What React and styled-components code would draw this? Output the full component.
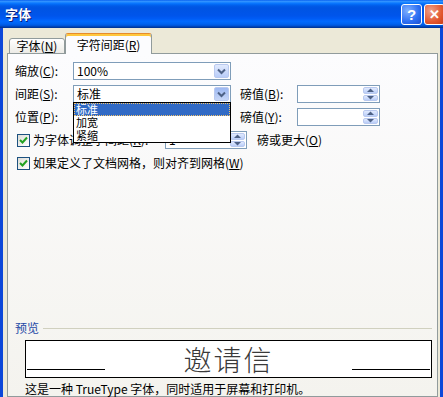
import styled, { createGlobalStyle } from 'styled-components'

const GlobalStyle = createGlobalStyle`
  html, body {
    margin: 0;
    padding: 0;
    background: #ece9d8;
  }
  body {
    font-family: "Noto Sans CJK SC", "Noto Sans", sans-serif;
    font-size: 12px;
    color: #000;
  }
`

const Chevron = () => (
  <svg width="9" height="7" viewBox="0 0 9 7">
    <path d="M1 1.5 L4.5 5 L8 1.5" fill="none" stroke="#4d6185" strokeWidth="2" />
  </svg>
)

const Arrow = ({ up }) => (
  <svg width="7" height="4" viewBox="0 0 7 4">
    <path d={up ? 'M0 4 L3.5 0.5 L7 4 Z' : 'M0 0 L3.5 3.5 L7 0 Z'} fill="#4d6185" />
  </svg>
)

const Tick = () => (
  <svg width="9" height="9" viewBox="0 0 9 9">
    <path d="M1 4 L3.5 6.5 L8 1.5" fill="none" stroke="#21a121" strokeWidth="2" />
  </svg>
)

const Combo = ({ value, pressed, children }) => (
  <ComboBox>
    <ComboValue>{value}</ComboValue>
    <DropButton $pressed={pressed}>
      <Chevron />
    </DropButton>
    {children}
  </ComboBox>
)

const Spin = ({ value, width }) => (
  <ComboBox $width={width}>
    <ComboValue>{value}</ComboValue>
    <SpinButtons>
      <SpinHalf>
        <Arrow up />
      </SpinHalf>
      <SpinHalf>
        <Arrow />
      </SpinHalf>
    </SpinButtons>
  </ComboBox>
)

const CheckBox = () => (
  <Box>
    <Tick />
  </Box>
)

const App = () => (
  <Window>
    <GlobalStyle />
    <TitleBar>
      <Title>字体</Title>
      <CaptionButton $kind="help">?</CaptionButton>
      <CaptionButton $kind="close">✕</CaptionButton>
    </TitleBar>
    <Frame>
      <Tabs>
        <Tab>
          字体(<u>N</u>)
        </Tab>
        <Tab $active>
          字符间距(<u>R</u>)
        </Tab>
      </Tabs>
      <Panel>
        <Form>
          <Label>
            缩放(<u>C</u>):
          </Label>
          <Combo value="100%" />
          <span />
          <span />
          <span />

          <Label>
            间距(<u>S</u>):
          </Label>
          <Combo value="标准" pressed>
            <DropList>
              <DropItem $selected>标准</DropItem>
              <DropItem>加宽</DropItem>
              <DropItem>紧缩</DropItem>
            </DropList>
          </Combo>
          <span />
          <Label>
            磅值(<u>B</u>):
          </Label>
          <Spin />

          <Label>
            位置(<u>P</u>):
          </Label>
          <Combo value="标准" />
          <span />
          <Label>
            磅值(<u>Y</u>):
          </Label>
          <Spin />

          <CheckRow>
            <CheckBox />
            <KernLabel>
              为字体调整字间距(<u>K</u>):
            </KernLabel>
            <Spin value="1" width={82} />
            <After>
              磅或更大(<u>O</u>)
            </After>
          </CheckRow>

          <CheckRow>
            <CheckBox />
            <span>
              如果定义了文档网格，则对齐到网格(<u>W</u>)
            </span>
          </CheckRow>
        </Form>

        <Preview>
          <PreviewHeader>
            <GroupTitle>预览</GroupTitle>
            <GroupLine />
          </PreviewHeader>
          <PreviewBox>
            <Rule $side="left" />
            <Sample>邀请信</Sample>
            <Rule $side="right" />
          </PreviewBox>
          <Description>这是一种 TrueType 字体，同时适用于屏幕和打印机。</Description>
        </Preview>
      </Panel>
    </Frame>
  </Window>
)

export default App

const Window = styled.div`
  width: 443px;
  height: 397px;
  display: flex;
  flex-direction: column;
  overflow: hidden;
`

const TitleBar = styled.div`
  height: 28px;
  flex-shrink: 0;
  display: flex;
  align-items: center;
  gap: 2px;
  padding-left: 5px;
  background: linear-gradient(
    to bottom,
    #0058ee 0%,
    #3593ff 4%,
    #288eff 7%,
    #127dff 10%,
    #036ffc 14%,
    #0262ee 18%,
    #0057e5 24%,
    #0054e3 30%,
    #0055eb 56%,
    #005bf5 66%,
    #026afe 76%,
    #0062ef 86%,
    #0052d6 92%,
    #0040ab 96%,
    #003092 100%
  );
`

const Title = styled.div`
  flex: 1;
  color: #fff;
  font-weight: bold;
  font-size: 13px;
  line-height: 28px;
  text-shadow: 1px 1px 0 #0a1e7a;
`

const CaptionButton = styled.div`
  width: 21px;
  height: 21px;
  box-sizing: border-box;
  border: 1px solid #fff;
  border-radius: 3px;
  display: flex;
  align-items: center;
  justify-content: center;
  color: #fff;
  font-family: "Liberation Sans", sans-serif;
  font-weight: bold;
  font-size: ${p => (p.$kind === 'close' ? '13px' : '15px')};
  margin-right: ${p => (p.$kind === 'close' ? '-2px' : '0')};
  flex-shrink: 0;
  background: ${p =>
    p.$kind === 'close'
      ? 'radial-gradient(circle at 30% 30%, #f0a088, #e2572f 60%, #c63c17)'
      : 'radial-gradient(circle at 30% 30%, #7fb0ff, #2c6ef2 60%, #1c4fd0)'};
`

const Frame = styled.div`
  flex: 1;
  display: flex;
  flex-direction: column;
  background: #ece9d8;
  border-left: 3px solid #0c47d9;
  border-right: 3px solid #0c47d9;
  padding: 5px 2px 0 4px;
  min-height: 0;
`

const Tabs = styled.div`
  display: flex;
  align-items: flex-end;
  height: 21px;
  padding-left: 2px;
  margin-bottom: -1px;
  position: relative;
  z-index: 1;
`

const Tab = styled.div`
  box-sizing: border-box;
  width: ${p => (p.$active ? '87px' : '56px')};
  height: ${p => (p.$active ? '21px' : '16px')};
  border: 1px solid #919b9c;
  border-bottom: ${p => (p.$active ? 'none' : '1px solid #919b9c')};
  border-top: ${p => (p.$active ? '1px solid #e68b2c' : '1px solid #919b9c')};
  border-radius: 3px 3px 0 0;
  background: ${p =>
    p.$active ? '#fcfcfe' : 'linear-gradient(to bottom, #fff, #ecebe6)'};
  box-shadow: ${p => (p.$active ? 'inset 0 2px 0 #ffc73c' : 'none')};
  display: flex;
  align-items: center;
  justify-content: center;
  line-height: 14px;
  padding-top: ${p => (p.$active ? '1px' : '0')};
`

const Panel = styled.div`
  flex: 1;
  border: 1px solid #919b9c;
  background: linear-gradient(to bottom, #fcfcfe, #f4f3ee);
  padding: 8px 5px 0 7px;
  display: flex;
  flex-direction: column;
`

const Form = styled.div`
  display: grid;
  grid-template-columns: 58px 158px 9px 57px 83px;
  grid-auto-rows: 18px;
  row-gap: 5px;
  align-items: center;
`

const Label = styled.span`
  line-height: 18px;
  white-space: nowrap;
`

const ComboBox = styled.div`
  position: relative;
  box-sizing: border-box;
  height: 18px;
  width: ${p => (p.$width ? p.$width + 'px' : 'auto')};
  border: 1px solid #7f9db9;
  background: #fff;
  display: flex;
  align-items: stretch;
  padding-left: 3px;
`

const ComboValue = styled.span`
  flex: 1;
  line-height: 16px;
`

const DropButton = styled.div`
  width: 15px;
  margin: 1px;
  box-sizing: border-box;
  border: 1px solid #b9c9ef;
  border-radius: 2px;
  background: ${p =>
    p.$pressed
      ? 'linear-gradient(to bottom, #9db8f2, #c7d6f7)'
      : 'linear-gradient(to bottom, #e1eafe, #b9cdf8)'};
  display: flex;
  align-items: center;
  justify-content: center;
`

const SpinButtons = styled.div`
  width: 15px;
  margin: 1px;
  display: flex;
  flex-direction: column;
  gap: 1px;
`

const SpinHalf = styled.div`
  flex: 1;
  box-sizing: border-box;
  border: 1px solid #b9c9ef;
  border-radius: 2px;
  background: linear-gradient(to bottom, #e1eafe, #b9cdf8);
  display: flex;
  align-items: center;
  justify-content: center;
`

const DropList = styled.div`
  position: absolute;
  left: -1px;
  top: 100%;
  width: 158px;
  box-sizing: border-box;
  border: 1px solid #000;
  background: #fff;
  z-index: 5;
`

const DropItem = styled.div`
  height: 13px;
  line-height: 13px;
  font-size: 11px;
  padding-left: 2px;
  background: ${p => (p.$selected ? '#316ac5' : 'transparent')};
  color: ${p => (p.$selected ? '#fff' : '#000')};
  outline: ${p => (p.$selected ? '1px dotted #f2c26b' : 'none')};
  outline-offset: -1px;
`

const CheckRow = styled.div`
  grid-column: 1 / -1;
  display: flex;
  align-items: center;
  padding-left: 2px;
  gap: 3px;
  line-height: 18px;
  white-space: nowrap;
`

const Box = styled.div`
  width: 13px;
  height: 13px;
  box-sizing: border-box;
  border: 1px solid #1c5180;
  background: linear-gradient(135deg, #dcdcd7, #fff);
  display: flex;
  align-items: center;
  justify-content: center;
  flex-shrink: 0;
`

const KernLabel = styled.span`
  width: 129px;
`

const After = styled.span`
  margin-left: 7px;
`

const Preview = styled.div`
  margin-top: 149px;
  display: flex;
  flex-direction: column;
`

const PreviewHeader = styled.div`
  display: flex;
  align-items: center;
  height: 14px;
  gap: 4px;
`

const GroupTitle = styled.span`
  color: #1f49a6;
  line-height: 14px;
`

const GroupLine = styled.div`
  flex: 1;
  height: 1px;
  background: #d0d0bf;
`

const PreviewBox = styled.div`
  margin: 5px 0 0 10px;
  height: 38px;
  box-sizing: border-box;
  border: 1px solid #000;
  background: #fff;
  display: flex;
  align-items: flex-end;
`

const Rule = styled.div`
  width: 78px;
  height: 1px;
  background: #000;
  margin-bottom: 7px;
  margin-left: ${p => (p.$side === 'left' ? '1px' : '0')};
  margin-right: ${p => (p.$side === 'right' ? '1px' : '0')};
`

const Sample = styled.div`
  flex: 1;
  align-self: center;
  text-align: center;
  font-size: 28px;
  font-weight: 300;
  line-height: 34px;
  letter-spacing: 2px;
  color: #3a3a3a;
`

const Description = styled.div`
  margin: 4px 0 0 10px;
  line-height: 14px;
  white-space: nowrap;
`
